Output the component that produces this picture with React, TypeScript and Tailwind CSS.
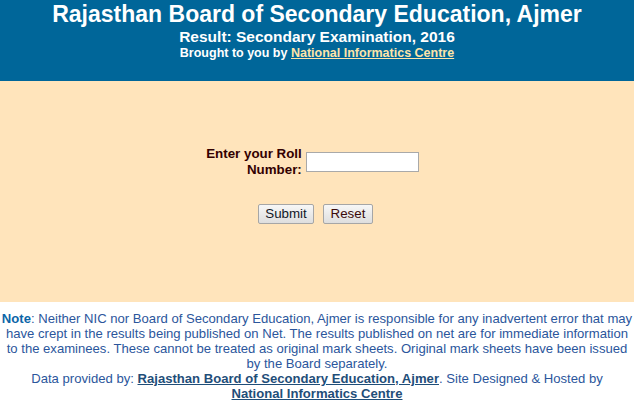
import React, { useState } from 'react';

export default function App() {
  const [roll, setRoll] = useState('');

  return (
    <div className="w-[634px] h-[400px] overflow-hidden bg-white font-['Liberation_Sans',Arial,sans-serif]">
      {/* header */}
      <div className="h-[81px] bg-[#006699] text-center text-white font-bold">
        <div className="pt-[1px] text-[23px] leading-[26px]">
          Rajasthan Board of Secondary Education, Ajmer
        </div>
        <div className="mt-[1px] text-[15.5px] leading-[18px]">
          Result: Secondary Examination, 2016
        </div>
        <div className="text-[12.5px] leading-[15px]">
          Brought to you by{' '}
          <a href="#" className="text-[#ffe4a8] underline">National Informatics Centre</a>
        </div>
      </div>

      {/* form */}
      <div className="h-[221px] bg-[#ffe4bb] pt-[65px]">
        <form onSubmit={(e) => e.preventDefault()} onReset={() => setRoll('')}>
          <div className="flex items-center justify-center gap-[4px] pr-[9px]">
            <label htmlFor="roll" className="text-right text-[13.33px] leading-[16px] font-bold text-[#330000]">
              Enter your Roll
              <br />
              Number:
            </label>
            <input
              id="roll"
              value={roll}
              onChange={(e) => setRoll(e.target.value)}
              className="w-[113px] h-[20px] border border-[#a9a9a9] bg-white px-1 text-[13px] outline-none"
            />
          </div>
          <div className="mt-[26px] flex justify-center gap-[9px] pr-[3px]">
            <button
              type="submit"
              className="h-[20px] w-[56px] rounded-[2px] border border-[#a6a6a6] bg-gradient-to-b from-[#f7f7f7] to-[#dedede] text-[13.33px] leading-[18px] text-[#111827]"
            >
              Submit
            </button>
            <button
              type="reset"
              className="h-[20px] w-[50px] rounded-[2px] border border-[#a6a6a6] bg-gradient-to-b from-[#f7f7f7] to-[#dedede] text-[13.33px] leading-[18px] text-[#3a0a0a]"
            >
              Reset
            </button>
          </div>
        </form>
      </div>

      {/* note */}
      <div className="pt-[9px] text-center text-[13.1px] leading-[15px] text-[#2b569c]">
        <span className="font-bold text-[#0b65a8]">Note</span>: Neither NIC nor Board of Secondary Education, Ajmer is responsible for any inadvertent error that may
        <br />
        have crept in the results being published on Net. The results published on net are for immediate information
        <br />
        to the examinees. These cannot be treated as original mark sheets. Original mark sheets have been issued
        <br />
        by the Board separately.
        <br />
        Data provided by:{' '}
        <a href="#" className="font-bold text-[#1f4e79] underline">Rajasthan Board of Secondary Education, Ajmer</a>. Site Designed &amp; Hosted by
        <br />
        <a href="#" className="font-bold text-[#1f4e79] underline">National Informatics Centre</a>
      </div>
    </div>
  );
}
